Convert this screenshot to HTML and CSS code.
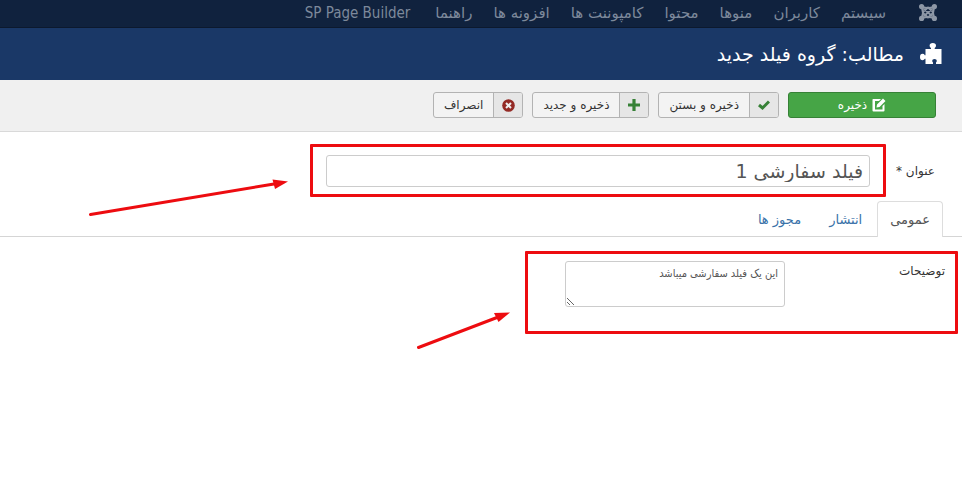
FILE: index.html
```
<!DOCTYPE html>
<html lang="fa" dir="rtl">
<head>
<meta charset="utf-8">
<title>مطالب: گروه فیلد جدید</title>
<link rel="stylesheet" href="styles.css">
</head>
<body>
<nav class="navbar">
  <a class="brand" href="#" aria-label="Joomla">
    <svg width="18" height="17" viewBox="0 0 18 17" fill="none" stroke="currentColor">
      <g fill="currentColor" stroke="none"><circle cx="2.6" cy="2.6" r="2.6"/><circle cx="15.4" cy="2.6" r="2.6"/><circle cx="2.6" cy="14.4" r="2.6"/><circle cx="15.4" cy="14.4" r="2.6"/></g>
      <path stroke-width="2.2" d="M3 3Q5 8.500 3 14M15 3Q13 8.500 15 14M3 3Q9 5 15 3M3 14Q9 12 15 14"/>
      <path stroke-width="1.8" d="M4 8L9 3.500L14 8M4 9L9 13.500L14 9M5 5L13 12M13 5L5 12"/>
    </svg>
  </a>
  <ul class="menu">
    <li><a href="#">سیستم</a></li>
    <li><a href="#">کاربران</a></li>
    <li><a href="#">منوها</a></li>
    <li><a href="#">محتوا</a></li>
    <li><a href="#">کامپوننت ها</a></li>
    <li><a href="#">افزونه ها</a></li>
    <li><a href="#">راهنما</a></li>
    <li><a class="builder" href="#">SP Page Builder</a></li>
  </ul>
</nav>
<header class="header">
  <svg width="22" height="22" viewBox="0 0 22 22" fill="currentColor"><path d="M5.500 6H11V5Q9.600 4.200 9.600 2.800Q9.600 0 12.800 0T16 2.800Q16 4.200 14.700 5V6H21.500V21H16V19.500Q16.800 18.800 16.800 17.800Q16.800 16 14.500 16T12.200 17.800Q12.200 18.800 13 19.500V21H5.500V15.800H4.800Q4.200 17.200 2.600 17.200Q0 17.200 0 14T2.600 10.800Q4.200 10.800 4.800 12.200H5.500Z"/></svg>
  <h1 class="page-title">مطالب: گروه فیلد جدید</h1>
</header>
<div class="toolbar">
  <button class="btn btn-save" type="button">
    <svg width="14" height="14" viewBox="0 0 14 14"><path fill="currentColor" d="M1 1H9L7 3H3V11.500H10.500V8L12.500 6V12.500Q12.500 13.500 11.500 13.500H1.500Q.5 13.500 .5 12.500V2Q.5 1 1 1ZM11 .5L13.500 3L7.500 9L4.500 9.500L5 6.500Z"/></svg>
    <span>ذخیره</span>
  </button>
  <button class="btn" type="button">
    <span class="btn-icon green"><svg width="12" height="12" viewBox="0 0 12 12"><path fill="none" stroke="currentColor" stroke-width="3" d="M1 6L4.500 9L11 2.500"/></svg></span>
    <span class="btn-text">ذخیره و بستن</span>
  </button>
  <button class="btn" type="button">
    <span class="btn-icon green"><svg width="12" height="12" viewBox="0 0 12 12"><path fill="none" stroke="currentColor" stroke-width="3.200" d="M6 0V12M0 6H12"/></svg></span>
    <span class="btn-text">ذخیره و جدید</span>
  </button>
  <button class="btn" type="button">
    <span class="btn-icon red"><svg width="13" height="13" viewBox="0 0 13 13"><circle cx="6.500" cy="6.500" r="6.300" fill="currentColor"/><path stroke="#eee" stroke-width="2" d="M4 4L9 9M9 4L4 9"/></svg></span>
    <span class="btn-text">انصراف</span>
  </button>
</div>
<main>
  <form>
    <div class="title-row">
      <label class="title-label" for="title">عنوان *</label>
      <div class="title-field">
        <input class="title-input" id="title" type="text" value="فیلد سفارشی 1">
        <svg class="arrow arrow-title" width="200" height="38" viewBox="0 0 200 38"><path stroke="currentColor" stroke-width="3" stroke-linecap="round" d="M2.500 35.500L186 5"/><path fill="currentColor" d="M200 2.500L184.500 .5L187 10Z"/></svg>
      </div>
    </div>
    <div class="tabs" role="tablist">
      <a class="tab active" role="tab" href="#">عمومی</a>
      <a class="tab" role="tab" href="#">انتشار</a>
      <a class="tab" role="tab" href="#">مجوز ها</a>
    </div>
    <div class="desc-row">
      <label class="desc-label" for="desc">توضیحات</label>
      <textarea class="desc-input" id="desc">این یک فیلد سفارشی میباشد</textarea>
      <svg class="arrow arrow-desc" width="94" height="38" viewBox="0 0 94 38"><path stroke="currentColor" stroke-width="3" stroke-linecap="round" d="M1.500 35.500L80 5.500"/><path fill="currentColor" d="M93 .5L77 1L81.500 10Z"/></svg>
    </div>
  </form>
</main>
</body>
</html>
```
FILE: styles.css
```
* { box-sizing: border-box; }
body {
  margin: 0;
  min-height: 100vh;
  background: #fff;
  color: #333;
  font: 12px/20px "DejaVu Sans", sans-serif;
}
a { color: inherit; text-decoration: none; }
.navbar {
  display: flex;
  align-items: center;
  height: 28px;
  padding: 0 25px 2px;
  background: #10223e;
  border-bottom: 1px solid #0c192e;
  color: #7d899b;
}
.brand { display: flex; margin-left: 33px; color: #8d97a6; }
.menu {
  display: flex;
  gap: 21px;
  margin: 0;
  padding: 0;
  list-style: none;
  font-size: 15px;
  white-space: nowrap;
}
.builder { margin-right: 4px; font-family: "DejaVu Sans Condensed", "DejaVu Sans", sans-serif; }
.header {
  display: flex;
  align-items: center;
  gap: 16px;
  height: 52px;
  padding: 0 20px;
  background: #1a3867;
  color: #fff;
}
.page-title { margin: 0; font-size: 19px; line-height: 32px; font-weight: 400; }
.toolbar {
  display: flex;
  gap: 9px;
  padding: 12px 26px 13px;
  background: #f0f0f0;
  border-bottom: 1px solid #d9d9d9;
}
.btn {
  display: flex;
  height: 26px;
  padding: 0;
  overflow: hidden;
  background: #f3f3f3;
  border: 1px solid #b3b3b3;
  border-radius: 3px;
  color: #333;
  font: inherit;
  line-height: 24px;
}
.btn-icon {
  display: flex;
  align-items: center;
  justify-content: center;
  width: 29px;
  height: 24px;
  background: #e6e6e6;
  border-left: 1px solid #b3b3b3;
}
.btn-text { padding: 0 10px; }
.green { color: #378137; }
.red { color: #942a25; }
.btn-save {
  align-items: center;
  justify-content: center;
  gap: 5px;
  width: 148px;
  background: #46a546;
  border-color: #368136;
  color: #fff;
}
.title-row { display: flex; align-items: center; padding: 23px 27px 14px; }
.title-label { width: 65px; }
.title-field { position: relative; flex: 0 1 544px; }
.title-input {
  display: block;
  width: 100%;
  height: 32px;
  padding: 0 6px;
  border: 1px solid #ccc;
  border-radius: 3px;
  color: #555;
  font: inherit;
  font-size: 19px;
}
.title-field::after {
  content: "";
  position: absolute;
  inset: -11px -16px -10px;
  border: 3px solid #ed0c10;
  border-radius: 1px;
  pointer-events: none;
}
.tabs {
  display: flex;
  padding: 0 19px;
  border-bottom: 1px solid #d5d5d5;
  font-size: 13px;
}
.tab {
  height: 35px;
  padding: 0 12px;
  border: 1px solid transparent;
  border-bottom: 0;
  line-height: 36px;
  color: #3871a8;
}
.tab + .tab { margin-right: 2px; }
.tab.active {
  height: 36px;
  margin-bottom: -1px;
  background: #fff;
  border-color: #ddd;
  border-radius: 4px 4px 0 0;
  color: #555;
}
.desc-row {
  position: relative;
  display: flex;
  align-items: flex-start;
  width: 433px;
  max-width: 100%;
  height: 83px;
  margin: 14px 4px 0;
  padding: 7px 10px;
  border: 3px solid #ed0c10;
  border-radius: 1px;
}
.desc-label { width: 160px; }
.desc-input {
  width: 220px;
  height: 46px;
  padding: 3px 6px;
  border: 1px solid #ccc;
  border-radius: 3px;
  color: #555;
  font-family: "DejaVu Sans Condensed", "DejaVu Sans", sans-serif;
  font-size: 11px;
  line-height: 18px;
}
.arrow { position: absolute; color: #ed0c10; }
.arrow-title { right: 582px; top: 24px; }
.arrow-desc { right: 444px; top: 58px; }
```
